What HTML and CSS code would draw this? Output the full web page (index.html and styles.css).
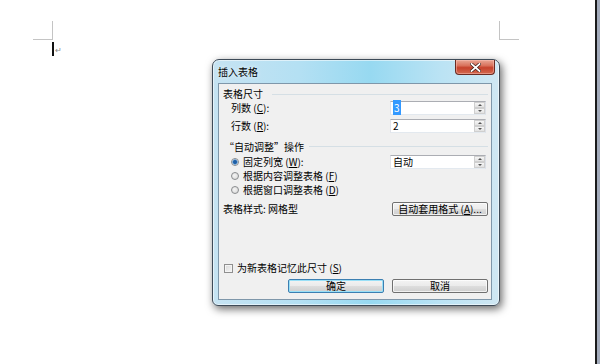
FILE: index.html
```html
<!DOCTYPE html>
<html lang="zh-CN">
<head>
<meta charset="utf-8">
<title>插入表格</title>
<link rel="stylesheet" href="styles.css">
</head>
<body>
<div class="screen">
  <main class="doc">
    <div class="marks">
      <div class="mark mark-l"></div>
      <div class="mark mark-r"></div>
    </div>
    <div class="line1"><span class="caret"></span><span class="para">↵</span></div>

    <section class="dialog">
      <header class="titlebar">
        <span class="title">插入表格</span>
        <button class="close" type="button" aria-label="关闭">
          <svg width="11" height="9" viewBox="0 0 11 9"><path d="M1.5 1 L9.5 8 M9.5 1 L1.5 8" stroke="#3a1a14" stroke-width="3.2" stroke-linecap="square"/><path d="M1.5 1 L9.5 8 M9.5 1 L1.5 8" stroke="#ffffff" stroke-width="1.8" stroke-linecap="square"/></svg>
        </button>
      </header>
      <div class="client">
        <div class="group-head"><span class="txt">表格尺寸</span><i class="rule"></i></div>
        <div class="field field-1">
          <span class="lbl">列数 (<u>C</u>):</span>
          <div class="spin"><span class="val"><span class="sel">3</span></span><span class="arrows"><i class="up"></i><i class="down"></i></span></div>
        </div>
        <div class="field field-2">
          <span class="lbl">行数 (<u>R</u>):</span>
          <div class="spin"><span class="val">2</span><span class="arrows"><i class="up"></i><i class="down"></i></span></div>
        </div>
        <div class="group-head head-2"><span class="txt quoted">“自动调整”操作</span><i class="rule"></i></div>
        <div class="opt opt-1">
          <span class="radio on"></span><span class="lbl">固定列宽 (<u>W</u>):</span>
          <div class="spin"><span class="val">自动</span><span class="arrows"><i class="up"></i><i class="down"></i></span></div>
        </div>
        <div class="opt opt-2"><span class="radio"></span><span class="lbl">根据内容调整表格 (<u>F</u>)</span></div>
        <div class="opt opt-3"><span class="radio"></span><span class="lbl">根据窗口调整表格 (<u>D</u>)</span></div>
        <div class="style-row">
          <span class="lbl">表格样式: 网格型</span>
          <button class="btn" type="button">自动套用格式 (<u>A</u>)...</button>
        </div>
        <div class="check-row"><span class="checkbox"></span><span class="lbl">为新表格记忆此尺寸 (<u>S</u>)</span></div>
        <div class="actions">
          <button class="btn btn-default" type="button">确定</button>
          <button class="btn" type="button">取消</button>
        </div>
      </div>
    </section>
  </main>
  <div class="edge"></div>
</div>
</body>
</html>
```

FILE: styles.css
```css
* { box-sizing: border-box; margin: 0; padding: 0; }
html, body { width: 600px; height: 364px; overflow: hidden; background: #fff; }
body {
  font-family: "Noto Sans CJK SC", "Noto Sans", sans-serif;
  font-size: 10px;
  line-height: 12px;
  color: #000;
}
u { text-decoration: underline; }

.screen { display: flex; height: 364px; }
.doc { flex: 1; position: relative; padding-top: 21px; }
.edge { width: 5px; border-left: 2px solid #1b1b1b; background: #a3abbb; }

/* page corner marks */
.marks { display: flex; justify-content: space-between; padding: 0 76px 0 33px; }
.mark { width: 20px; height: 19px; border-bottom: 1px solid #c4c4c4; }
.mark-l { border-right: 1px solid #c4c4c4; }
.mark-r { border-left: 1px solid #c4c4c4; }

.line1 { display: flex; align-items: flex-start; padding-left: 52px; margin-top: 2px; }
.caret { width: 2px; height: 14px; background: #111; }
.para { font-size: 8px; line-height: 8px; height: 8px; color: #8a8a8a; margin-top: 4px; margin-left: 1px; }

/* text boxes kept to the 12px line */
.lbl, .txt, .title, .val, .btn {
  display: inline-block;
  height: 12px;
  line-height: 12px;
  white-space: nowrap;
}
.quoted { padding-left: 1px; }

/* dialog window */
.dialog {
  position: absolute;
  left: 212px;
  top: 59px;
  width: 288px;
  height: 247px;
  display: flex;
  flex-direction: column;
  padding: 0 7px 5px 5px;
  border: 1px solid #3e4b58;
  border-radius: 7px 7px 6px 6px;
  background: linear-gradient(to right, #c6e3f2 0%, #b4e0f3 30%, #97d9f1 55%, #bbe3f4 80%, #cfe7f3 100%);
  box-shadow: 2px 3px 8px rgba(0, 0, 0, 0.6), inset 0 0 0 1px rgba(255, 255, 255, 0.55);
}
.titlebar { height: 23px; display: flex; align-items: flex-start; }
.title { margin-top: 6px; color: #000; text-shadow: 0 0 4px rgba(255,255,255,0.9); }
.close {
  margin-left: auto;
  margin-right: -3px;
  width: 40px;
  height: 15px;
  border: 1px solid #6a2b22;
  border-top: none;
  border-radius: 0 0 4px 4px;
  background: linear-gradient(#e9a896 0%, #d9725c 40%, #c6422c 55%, #d36a50 100%);
  display: flex;
  align-items: center;
  justify-content: center;
  box-shadow: inset 0 0 0 1px rgba(255, 200, 190, 0.45);
}
.close svg { display: block; }

.client {
  flex: 1;
  display: flex;
  flex-direction: column;
  background: #f0f0f0;
  border: 1px solid #7f97aa;
  padding-bottom: 6px;
}

.group-head { display: flex; align-items: center; height: 12px; margin-top: 4px; padding-left: 4px; }
.group-head .rule { flex: 1; height: 0; border-top: 1px solid #d5dfe5; margin: 0 3px 0 9px; }
.head-2 { margin-top: 7px; height: 13px; }
.head-2 .rule { margin-left: 5px; }

.field { display: flex; align-items: center; height: 14px; padding-left: 12px; }
.field-1 { margin-top: 1px; }
.field-2 { margin-top: 4px; }

.spin {
  margin-left: auto;
  margin-right: 5px;
  width: 96px;
  height: 14px;
  display: flex;
  background: #fff;
  border: 1px solid #abadb3;
  border-color: #abadb3 #dbdfe6 #e3e9ef #e2e3ea;
}
.spin .val { flex: 1; padding-left: 2px; }
.sel { background: #3399ff; color: #fff; padding: 0 1px; }
.arrows { width: 11px; display: flex; flex-direction: column; }
.arrows i {
  flex: 1;
  display: flex;
  align-items: center;
  justify-content: center;
  background: linear-gradient(#f6f6f6, #e2e2e2);
  border: 1px solid #cfcfcf;
}
.arrows i::after { content: ""; border-left: 2px solid transparent; border-right: 2px solid transparent; }
.arrows .up::after { border-bottom: 2px solid #555; }
.arrows .down::after { border-top: 2px solid #555; }

.opt { display: flex; align-items: center; padding-left: 12px; }
.opt-1 { margin-top: 2px; height: 14px; }
.opt-2 { height: 13px; }
.opt-3 { margin-top: 1px; height: 14px; }
.opt .lbl { margin-left: 4px; }
.radio {
  width: 8px;
  height: 8px;
  border-radius: 50%;
  border: 1px solid #8a8c8e;
  background: radial-gradient(circle at 40% 40%, #f4f4f4, #d6d6d6);
}
.radio.on { background: radial-gradient(circle, #1e5fa6 0 1.5px, #7fb4e6 2.5px, #e6eef6 3px); }

.style-row { display: flex; align-items: center; height: 14px; margin-top: 5px; padding-left: 4px; }

.btn {
  width: 96px;
  height: 14px;
  font: inherit;
  font-size: 10px;
  line-height: 12px;
  color: #000;
  border: 1px solid #707070;
  border-radius: 2px;
  background: linear-gradient(#f3f3f3 0%, #ebebeb 48%, #dddddd 52%, #cfcfcf 100%);
  box-shadow: inset 0 0 0 1px rgba(255, 255, 255, 0.7);
}
.style-row .btn { margin-left: auto; margin-right: 3px; }
.btn-default { border-color: #3c7fb1; box-shadow: inset 0 0 0 1px #9ae0f7; }

.check-row { display: flex; align-items: center; height: 14px; margin-top: auto; padding-left: 5px; }
.checkbox {
  width: 9px;
  height: 9px;
  border: 1px solid #8f8f8f;
  background: linear-gradient(135deg, #d8d8d8, #f6f6f6);
  box-shadow: inset 0 0 0 1px #f4f4f4;
}
.check-row .lbl { margin-left: 4px; }

.actions { display: flex; justify-content: flex-end; gap: 8px; margin-top: 4px; margin-right: 3px; }
```
